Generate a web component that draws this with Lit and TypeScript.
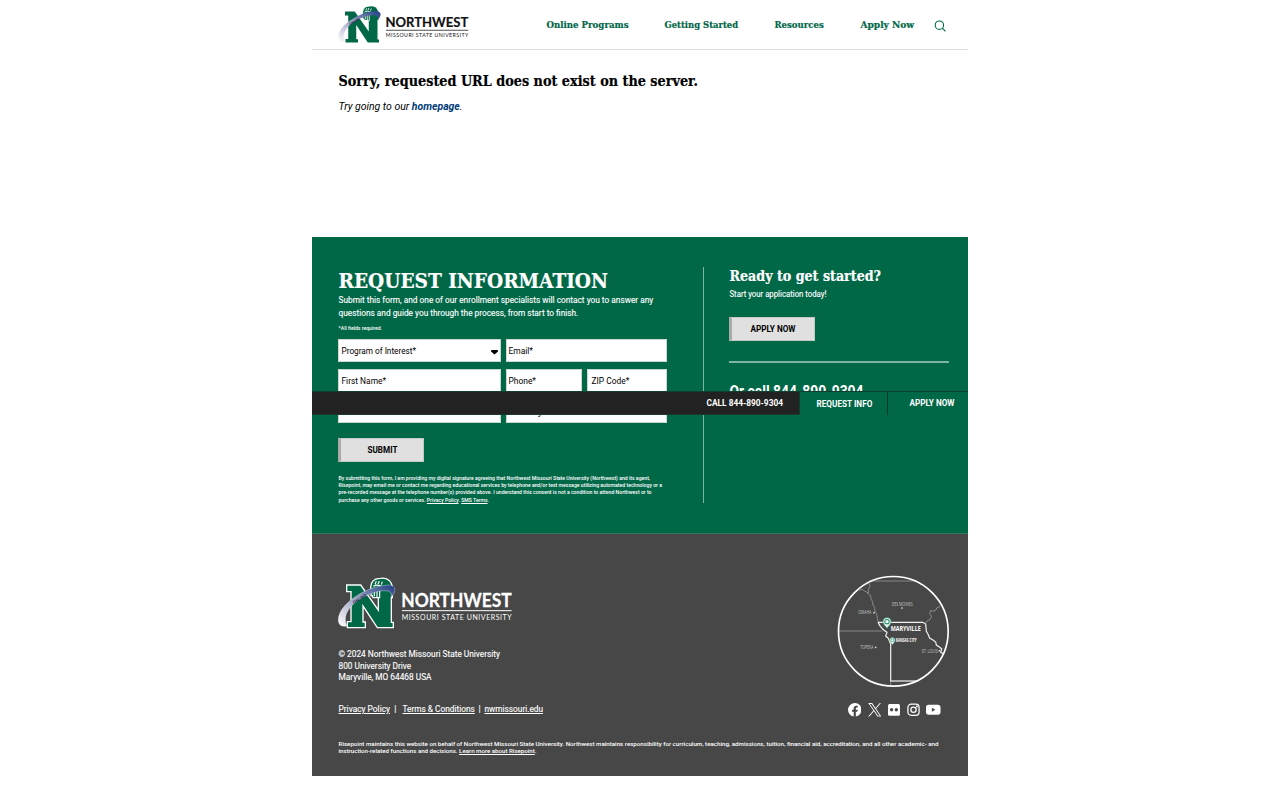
import { LitElement, html, css, svg } from "lit";
import { customElement, property } from "lit/decorators.js";

/** A single line of text, scaled horizontally to an exact width. */
@customElement("fit-line")
class FitLine extends LitElement {
  @property({ type: Number }) w = 100;
  static styles = css`
    :host { display: block; white-space: nowrap; flex: none; }
    .t { display: inline-block; transform-origin: 0 0; white-space: nowrap; vertical-align: top; }
  `;
  render() {
    return html`<span class="t"><slot></slot></span>`;
  }
  firstUpdated() {
    const t = this.renderRoot.querySelector(".t") as HTMLElement;
    this.style.width = this.w + "px";
    requestAnimationFrame(() => {
      const n = t.getBoundingClientRect().width;
      if (n > 0) t.style.transform = `translateX(.5px) scaleX(${this.w / n})`;
    });
  }
}

@customElement("nw-logo")
class NwLogo extends LitElement {
  @property({ type: Boolean }) dark = false;
  static styles = css`
    :host { display: block; }
    svg { display: block; width: 100%; height: 100%; overflow: visible; }
    .name { font: 700 54.5px Lato, sans-serif; }
    .sub { font: 400 21px Lato, sans-serif; }
    .on { font: 900 11px Lato, sans-serif; fill: #16213f; }
  `;
  render() {
    const ink = this.dark ? "#fff" : "#111";
    const n = "M67 60H106L162 140V88H140V72H197V172H203V184H158L112 114V171H119V184H69V170H80V76H67Z";
    return html`<svg viewBox="39 34 524 156">
      <defs>
        <linearGradient id="g" x1="0" y1="1" x2="1" y2="0">
          <stop offset="0" stop-color="#fff"></stop>
          <stop offset=".28" stop-color="#c9cbe0"></stop>
          <stop offset=".6" stop-color="#7f8db5"></stop>
          <stop offset="1" stop-color="#1f3d82"></stop>
        </linearGradient>
      </defs>
      <path d=${n} fill="#fff" stroke="#fff" stroke-width="8"></path>
      <path d="M138 76C134 50 146 38 166 38C190 34 204 50 202 76V96H144Z" fill="#006747" stroke="#fff" stroke-width="4"></path>
      <path d=${n} fill="#006747"></path>
      <path d="M150 56L154 47M159 55L163 46M169 57L172 48M145 62Q158 54 172 64T196 64M148 72V92M156 74V96M164 74V98" fill="none" stroke="#fff" stroke-width="3.4"></path>
      <path d="M66 181C38 188 32 160 50 132C78 92 140 60 190 58C216 58 213 80 198 94C206 73 176 69 136 85C84 106 48 143 66 181Z" fill="url(#g)" stroke=${this.dark ? "#fff" : "none"} stroke-width="1"></path>
      <text class="on" x="86" y="115" transform="rotate(-31 86 115)" textLength="46" lengthAdjust="spacingAndGlyphs">ONLINE</text>
      <text class="name" x="229" y="123" fill=${ink} stroke=${ink} stroke-width=".8" textLength="331" lengthAdjust="spacingAndGlyphs">NORTHWEST</text>
      <path d="M231 135H560" stroke=${ink} stroke-width="3"></path>
      <text class="sub" x="230" y="163" fill=${ink} textLength="330">MISSOURI STATE UNIVERSITY</text>
    </svg>`;
  }
}

@customElement("region-map")
class RegionMap extends LitElement {
  static styles = css`
    :host { display: block; width: 112.7px; height: 112.7px; }
    svg { display: block; width: 100%; height: 100%; }
    .s { font: 400 14px "Open Sans", sans-serif; fill: #c4c4c4; }
    .k { font: 700 13px "Open Sans", sans-serif; fill: #fff; }
    .m { font: 700 21px "Open Sans", sans-serif; fill: #fff; }
  `;
  pin(x: number, y: number, k: number) {
    return svg`<g transform="translate(${x} ${y}) scale(${k})">
      <path d="M0 18C-4 11-12 7-12-2A12 12 0 0 1 12-2C12 7 4 11 0 18Z" fill="#e7f3ee" stroke="#3f9b78" stroke-width="2"></path>
      <circle cy="-2" r="6.5" fill="#fff" stroke="#1f8a62" stroke-width="3"></circle></g>`;
  }
  render() {
    const ll = (t: string, x: number, y: number, w: number, c = "s") =>
      svg`<text class=${c} x=${x} y=${y} textLength=${w} lengthAdjust="spacingAndGlyphs">${t}</text>`;
    return html`<svg viewBox="22 15 338 338">
      <g fill="none" stroke="#a9a9a9" stroke-width="2">
        <path d="M118 33H262M28 183H158M89 61L98 58 104 63 112 66 119 75 123 76 124 86 128 94 130 105 135 112 136 124 141 132 143 145 146 157"></path>
        <path d="M117 38L121 49 116 58 117 67 112 70M332 109L321 114 318 121 309 124 303 121 300 132 306 138 301 149 292 153 288 159M183 333V348M262 333L183 333"></path>
      </g>
      <path d="M145 157H279L288 162 290 184 296 194 300 204 311 211 318 216 320 225 329 231 336 236 333 247 341 251M145 157L152 169 162 180 172 187 168 198 176 205 181 218H183V333H265" fill="none" stroke="#f2f2f2" stroke-width="3.6"></path>
      <circle cx="191" cy="184" r="164.5" fill="none" stroke="#fff" stroke-width="5"></circle>
      ${ll("DES MOINES", 186, 108, 63)}${ll("OMAHA", 86, 133, 39)}${ll("TOPEKA", 92, 237, 39)}${ll("ST. LOUIS", 276, 249, 48)}
      <g fill="#ddd"><circle cx="217" cy="114" r="2.6"></circle><circle cx="133" cy="128" r="2.6"></circle><circle cx="138" cy="232" r="2.6"></circle><circle cx="329" cy="242" r="2.6"></circle></g>
      ${this.pin(172, 157, 1)}${this.pin(188, 212, 0.68)}
      ${ll("MARYVILLE", 183, 182, 90, "m")}${ll("KANSAS CITY", 198, 217, 63, "k")}
    </svg>`;
  }
}

@customElement("app-root")
class AppRoot extends LitElement {
  static styles = css`
    :host { display: block; font-family: Roboto, sans-serif; color: #000; }
    * { box-sizing: border-box; }
    .page { width: 656px; margin: 0 auto; height: 800px; position: relative; background: #fff; }
    a { color: inherit; }
    .slab { font-family: "DejaVu Serif Condensed", "DejaVu Serif", serif; font-weight: 700; -webkit-text-stroke: .2px currentColor; }
    header { height: 50px; border-bottom: 1.3px solid #dedede; padding-left: 26px; display: flex; }
    .hlogo { width: 131px; height: 39px; margin-top: 5px; }
    nav { display: flex; margin-left: 77px; gap: 36.3px; padding-top: 17px; font-size: 10px; line-height: 15px; color: #006747; }
    .search { width: 12px; height: 12px; margin: 19.5px 0 0 21px; }
    .main { height: 186.5px; padding: 20.5px 26px 0; }
    h1 { margin: 0; font-size: 15.4px; line-height: 21px; }
    .try { font-size: 10.6px; line-height: 15px; font-style: italic; margin-top: 7px; }
    .try a { font-weight: 700; color: #003a79; text-decoration: none; }
    .request { height: 297.5px; background: #006747; color: #fff; display: flex; padding: 30.5px 18.5px 0 26.3px; border-bottom: 1px solid #33755e; }
    .left { width: 365.7px; height: 236px; border-right: 1.3px solid #7fb3a3; flex: none; }
    .right { padding-left: 25.2px; flex: 1; }
    h2 { margin: 0; }
    .big { font-size: 20.4px; line-height: 27px; padding-top: 1px; height: 27px; }
    .intro { font-size: 8.4px; line-height: 13px; -webkit-text-stroke: .12px currentColor; }
    .req { font-size: 5.4px; line-height: 7px; margin-top: 4.5px; font-weight: 500; }
    .form { display: grid; grid-template-columns: 162.5px 76px 80.5px; column-gap: 5px; row-gap: 6.5px; margin-top: 7.2px; grid-auto-rows: 23.7px; font-size: 8.5px; line-height: 12px; color: #000; }
    .f { background: #fff; border: 1px solid #cdd8d4; padding: 5.6px 1.4px 0; }
    .f.wide { grid-column: span 2; }
    .f.sel { display: flex; justify-content: space-between; padding-left: 1.7px; }
    .f.zip { padding-left: 3.4px; }
    .arrow { width: 7px; height: 4.5px; margin-top: 5px; }
    .btn { width: 85.5px; height: 24px; background: #e0e0e0; border: 1px solid #c4c8c6; border-left: 3px solid #aaa; color: #000; font-size: 9.9px; font-weight: 700; line-height: 22.5px; display: flex; justify-content: center; }
    .submit { margin-top: 15.3px; }
    .legal { font-size: 5.3px; line-height: 7.2px; margin-top: 13px; font-weight: 500; }
    .h3 { font-size: 15.4px; line-height: 18px; }
    .start { font-size: 8.3px; line-height: 12px; margin-top: 2.5px; -webkit-text-stroke: .12px currentColor; }
    .apply { margin-top: 17.5px; }
    .rule { height: 1.5px; background: #7fb3a3; margin: 20px 0; width: 219.5px; }
    .call { font-size: 16px; line-height: 18px; font-weight: 700; }
    .sticky { position: absolute; left: 0; top: 390.5px; width: 656px; height: 24.5px; display: flex; background: #006747; border-top: 1px solid #133e2f; color: #fff; font-size: 9.9px; line-height: 12px; font-weight: 700; }
    .dark { width: 488px; background: #222; display: flex; justify-content: flex-end; padding: 5px 17px 0 0; border-right: 1px solid #103d2e; border-bottom: 1px solid #1c3b30; }
    .mid { width: 88px; padding: 6px 0 0 15.5px; border-right: 1px solid #003c29; }
    .end { padding: 5px 0 0 21px; }
    footer { height: 242px; background: #474747; color: #fff; padding: 42px 18px 0 26px; }
    .top { display: flex; justify-content: space-between; height: 126px; }
    .flogo { width: 174.7px; height: 52px; margin-top: .5px; }
    .addr { font-size: 8.5px; line-height: 11.5px; margin-top: 20.8px; -webkit-text-stroke: .12px currentColor; }
    .map { margin: -1px 0 0 0; }
    .links { display: flex; justify-content: space-between; height: 16px; padding-right: 9.5px; }
    .ll { display: flex; font-size: 8.5px; line-height: 15px; -webkit-text-stroke: .12px currentColor; }
    .bar { width: 12px; padding-left: 4.8px; flex: none; }
    .bar.b2 { width: 10.3px; }
    .soc { display: flex; align-items: center; gap: 6.5px; }
    .soc svg { display: block; height: 13.5px; }
    .fine { font-size: 6.1px; line-height: 7.9px; margin-top: 21.5px; font-weight: 500; }
  `;

  render() {
    return html`<div class="page">
      <header>
        <nw-logo class="hlogo"></nw-logo>
        <nav class="slab">
          <fit-line w="82">Online Programs</fit-line>
          <fit-line w="73.6">Getting Started</fit-line>
          <fit-line w="49.2">Resources</fit-line>
          <fit-line w="53.6">Apply Now</fit-line>
        </nav>
        <svg class="search" viewBox="0 0 12 12" fill="none" stroke="#006747" stroke-width="1.1"><circle cx="5.4" cy="5.2" r="4.2"></circle><path d="M8.4 8.2L11.4 11.3"></path></svg>
      </header>
      <div class="main">
        <h1 class="slab"><fit-line w="359.5">Sorry, requested URL does not exist on the server.</fit-line></h1>
        <fit-line class="try" w="124">Try going to our <a>homepage</a>.</fit-line>
      </div>
      <section class="request">
        <div class="left">
          <h2 class="big slab"><fit-line w="269.5">REQUEST INFORMATION</fit-line></h2>
          <div class="intro">
            <fit-line w="314.7">Submit this form, and one of our enrollment specialists will contact you to answer any</fit-line>
            <fit-line w="239.8">questions and guide you through the process, from start to finish.</fit-line>
          </div>
          <fit-line class="req" w="43.5">*All fields required.</fit-line>
          <div class="form">
            <div class="f sel"><fit-line w="74.5">Program of Interest*</fit-line><svg class="arrow" viewBox="0 0 7 4.5"><path d="M.4 0H6.6L7 1.6 3.5 4.5 0 1.6Z"></path></svg></div>
            <div class="f wide"><fit-line w="24.5">Email*</fit-line></div>
            <div class="f"><fit-line w="44.5">First Name*</fit-line></div>
            <div class="f"><fit-line w="27.5">Phone*</fit-line></div>
            <div class="f zip"><fit-line w="37.8">ZIP Code*</fit-line></div>
            <div class="f"><fit-line w="44">Last Name*</fit-line></div>
            <div class="f wide"><fit-line w="38">Country*</fit-line></div>
          </div>
          <div class="btn submit"><fit-line w="30">SUBMIT</fit-line></div>
          <div class="legal">
            <fit-line w="311.5">By submitting this form, I am providing my digital signature agreeing that Northwest Missouri State University (Northwest) and its agent,</fit-line>
            <fit-line w="323.5">Risepoint, may email me or contact me regarding educational services by telephone and/or text message utilizing automated technology or a</fit-line>
            <fit-line w="313">pre-recorded message at the telephone number(s) provided above. I understand this consent is not a condition to attend Northwest or to</fit-line>
            <fit-line w="150.5">purchase any other goods or services. <u>Privacy Policy</u>. <u>SMS Terms</u>.</fit-line>
          </div>
        </div>
        <div class="right">
          <h2 class="h3 slab"><fit-line w="151.5">Ready to get started?</fit-line></h2>
          <fit-line class="start" w="97">Start your application today!</fit-line>
          <div class="btn apply"><fit-line w="45">APPLY NOW</fit-line></div>
          <div class="rule"></div>
          <fit-line class="call" w="134">Or call 844-890-9304</fit-line>
        </div>
      </section>
      <div class="sticky">
        <div class="dark"><fit-line w="76.5">CALL 844-890-9304</fit-line></div>
        <div class="mid"><fit-line w="55.8">REQUEST INFO</fit-line></div>
        <div class="end"><fit-line w="45">APPLY NOW</fit-line></div>
      </div>
      <footer>
        <div class="top">
          <div>
            <nw-logo class="flogo" dark></nw-logo>
            <div class="addr">
              <fit-line w="161.5">© 2024 Northwest Missouri State University</fit-line>
              <fit-line w="72.7">800 University Drive</fit-line>
              <fit-line w="93">Maryville, MO 64468 USA</fit-line>
            </div>
          </div>
          <region-map class="map"></region-map>
        </div>
        <div class="links">
          <div class="ll">
            <fit-line w="51.5"><u>Privacy Policy</u></fit-line><span class="bar">|</span>
            <fit-line w="72.3"><u>Terms &amp; Conditions</u></fit-line><span class="bar b2">|</span>
            <fit-line w="58.5"><u>nwmissouri.edu</u></fit-line>
          </div>
          <div class="soc">
            <svg width="13.5" viewBox="0 0 24 24"><path fill="#fff" d="M24 12A12 12 0 1 0 10.1 23.9V15.5H7.1V12H10.1V9.4C10.1 6.4 11.9 4.7 14.6 4.7C15.9 4.7 17.3 5 17.3 5V7.9H15.8C14.3 7.9 13.9 8.8 13.9 9.8V12H17.2L16.7 15.5H13.9V23.9A12 12 0 0 0 24 12Z"></path></svg>
            <svg width="13.5" viewBox="0 0 24 24"><path fill="#fff" fill-rule="evenodd" d="M14.3 10.2L23 0H21L13.4 8.8 7.4 0H.4L9.5 13.3 .4 24H2.5L10.5 14.7 16.8 24H23.8ZM3.3 1.6H6.5L21 22.5H17.8Z"></path></svg>
            <svg width="12.5" viewBox="0 0 24 24"><rect x="0" y="1" width="23" height="22.5" rx="3" fill="#fff"></rect><circle cx="6.9" cy="12" r="3.2" fill="#474747"></circle><circle cx="16" cy="12" r="3.2" fill="#474747"></circle></svg>
            <svg width="13" viewBox="0 0 24 24" fill="none" stroke="#fff" stroke-width="2.3"><rect x="1.7" y="1.7" width="20.6" height="20.6" rx="6"></rect><circle cx="12" cy="12" r="4.9"></circle><circle cx="18.2" cy="5.9" r=".7"></circle></svg>
            <svg width="14.5" viewBox="0 0 29 24"><rect y="2" width="29" height="20" rx="5.5" fill="#fff"></rect><path d="M11.8 8L18.8 12L11.8 16Z" fill="#474747"></path></svg>
          </div>
        </div>
        <div class="fine">
          <fit-line w="600">Risepoint maintains this website on behalf of Northwest Missouri State University. Northwest maintains responsibility for curriculum, teaching, admissions, tuition, financial aid, accreditation, and all other academic- and</fit-line>
          <fit-line w="198">instruction-related functions and decisions. <u>Learn more about Risepoint</u>.</fit-line>
        </div>
      </footer>
    </div>`;
  }
}
